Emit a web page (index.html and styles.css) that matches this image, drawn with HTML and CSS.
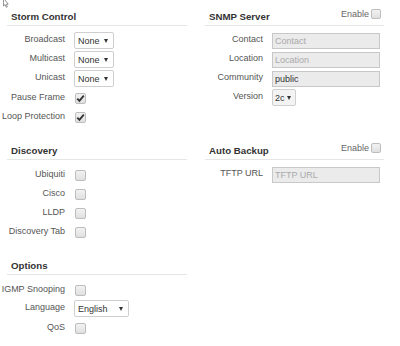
FILE: index.html
```html
<!DOCTYPE html>
<html>
<head>
<meta charset="utf-8">
<link rel="stylesheet" href="styles.css">
</head>
<body>
<svg class="cursor" width="9" height="8" viewBox="0 0 9 8"><path d="M3.5 -2 L3.5 6 L5 4.6 L6.3 7.3 L7.4 6.8 L6.2 4.2 L8.2 4.2 Z" fill="#fff" stroke="#777" stroke-width="0.8"/></svg>
<div class="page">
  <section class="sec">
    <div class="head"><h2>Storm Control</h2></div>
    <div class="body">
      <div class="row"><label>Broadcast</label><div class="select w40"><span>None</span><i class="caret"></i></div></div>
      <div class="row"><label>Multicast</label><div class="select w40"><span>None</span><i class="caret"></i></div></div>
      <div class="row"><label>Unicast</label><div class="select w40"><span>None</span><i class="caret"></i></div></div>
      <div class="row cbrow"><label>Pause Frame</label><span class="cb"><svg width="9" height="9" viewBox="0 0 9 9"><path d="M1.3 4.6 L3.4 6.8 L7.8 1.6" fill="none" stroke="#333" stroke-width="1.8"/></svg></span></div>
      <div class="row cbrow"><label>Loop Protection</label><span class="cb"><svg width="9" height="9" viewBox="0 0 9 9"><path d="M1.3 4.6 L3.4 6.8 L7.8 1.6" fill="none" stroke="#333" stroke-width="1.8"/></svg></span></div>
    </div>
  </section>
  <section class="sec">
    <div class="head"><h2>SNMP Server</h2><span class="enable">Enable<span class="cb small"></span></span></div>
    <div class="body">
      <div class="row"><label>Contact</label><div class="input ph">Contact</div></div>
      <div class="row"><label>Location</label><div class="input ph">Location</div></div>
      <div class="row"><label>Community</label><div class="input">public</div></div>
      <div class="row"><label>Version</label><div class="select w24 dis"><span>2c</span><i class="caret"></i></div></div>
    </div>
  </section>
  <section class="sec">
    <div class="head"><h2>Discovery</h2></div>
    <div class="body">
      <div class="row cbrow"><label>Ubiquiti</label><span class="cb"></span></div>
      <div class="row cbrow"><label>Cisco</label><span class="cb"></span></div>
      <div class="row cbrow"><label>LLDP</label><span class="cb"></span></div>
      <div class="row cbrow"><label>Discovery Tab</label><span class="cb"></span></div>
    </div>
  </section>
  <section class="sec">
    <div class="head"><h2>Auto Backup</h2><span class="enable">Enable<span class="cb small"></span></span></div>
    <div class="body">
      <div class="row"><label>TFTP URL</label><div class="input ph">TFTP URL</div></div>
    </div>
  </section>
  <section class="sec">
    <div class="head"><h2>Options</h2></div>
    <div class="body">
      <div class="row cbrow"><label>IGMP Snooping</label><span class="cb"></span></div>
      <div class="row"><label>Language</label><div class="select w55"><span>English</span><i class="caret"></i></div></div>
      <div class="row cbrow"><label>QoS</label><span class="cb"></span></div>
    </div>
  </section>
</div>
</body>
</html>
```
FILE: styles.css
```css
html, body {
  margin: 0;
  padding: 0;
  background: #fff;
}
body {
  font-family: "Liberation Sans", Arial, sans-serif;
  font-size: 9px;
  color: #555;
  width: 400px;
  height: 346px;
  overflow: hidden;
  position: relative;
}
.cursor {
  position: absolute;
  left: 0;
  top: 0;
}
.page {
  display: grid;
  grid-template-columns: 180px 179px;
  column-gap: 18px;
  row-gap: 8px;
  padding-left: 7px;
  align-items: start;
}
.head {
  height: 25px;
  border-bottom: 1px solid #e6e6e6;
  display: flex;
  align-items: flex-end;
  justify-content: space-between;
  padding: 0 3px 0 4px;
}
.head h2 {
  margin: 0 0 2px 0;
  font-size: 9.7px;
  line-height: 12px;
  font-weight: bold;
  color: #333;
}
.enable {
  display: flex;
  align-items: center;
  margin-bottom: 6px;
  color: #666;
  font-size: 9px;
  line-height: 10px;
}
.body {
  padding-top: 5px;
}
.row {
  display: flex;
  align-items: center;
  height: 17px;
  padding: 1px 0;
}
.row label {
  width: 58px;
  text-align: right;
  padding-right: 9px;
  flex: none;
  margin-top: -3px;
  white-space: nowrap;
  direction: rtl;
}
.cbrow {
  height: 19px;
  padding: 0;
  align-items: flex-start;
}
.cbrow label {
  margin-top: 4px;
  line-height: 10px;
}
.cbrow .cb {
  margin-top: 5px;
  margin-left: 1px;
}
.cb {
  box-sizing: border-box;
  width: 11px;
  height: 11px;
  border: 1px solid #bdbdbd;
  border-radius: 2px;
  background: linear-gradient(#f2f2f2, #e0e0e0);
  display: inline-flex;
  align-items: center;
  justify-content: center;
  flex: none;
}
.cb.small {
  width: 10px;
  height: 10px;
  margin-left: 2px;
}
.select {
  box-sizing: border-box;
  height: 17px;
  border: 1px solid #cfcfcf;
  border-radius: 2px;
  background: #fff;
  display: flex;
  align-items: center;
  justify-content: space-between;
  padding: 0 5px 0 3px;
  color: #333;
  font-size: 9px;
}
.select.dis {
  background: #f3f3f3;
}
.w40 { width: 40px; }
.w24 { width: 24px; padding-right: 4px; padding-left: 2px; }
.w55 { width: 55px; }
.caret {
  width: 0;
  height: 0;
  border-left: 2.5px solid transparent;
  border-right: 2.5px solid transparent;
  border-top: 4px solid #333;
}
.input {
  box-sizing: border-box;
  width: 108px;
  height: 16px;
  border: 1px solid #c8c8c8;
  background: #ebebeb;
  padding: 0 2px;
  line-height: 14px;
  color: #333;
  font-size: 9px;
}
.input.ph {
  color: #aaa;
}
```
